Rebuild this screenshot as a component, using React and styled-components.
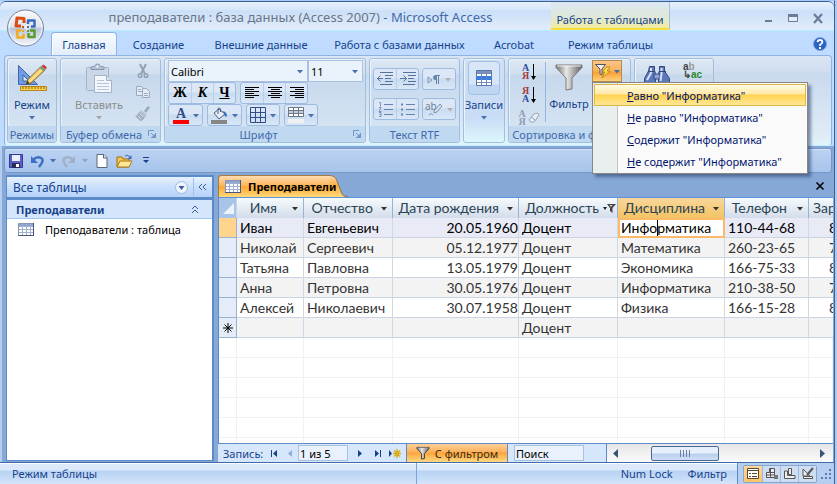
import React, { useState } from "react"
import styled, { createGlobalStyle, css } from "styled-components"

const ui = `"Noto Sans", "Open Sans", sans-serif`

const GlobalStyle = createGlobalStyle`
  * { box-sizing: border-box; }
  body {
    margin: 0;
    background: #a9cbf3;
    font-family: ${ui};
    font-size: 11px;
    color: #15428b;
  }
  button, input, select {
    font: inherit;
    color: inherit;
    margin: 0;
    padding: 0;
    border: 0;
    background: none;
    outline: none;
  }
  svg { display: block; flex: none; overflow: visible; }
`

const Window = styled.div`
  display: flex;
  flex-direction: column;
  min-height: 100vh;
  margin-right: 2px;
  border-top: 1px solid #a9cbf3;
  border-right: 1px solid #3b5f96;
  background: #bfdbff;
  position: relative;
`

/* ---------- title bar ---------- */

const TitleBar = styled.header`
  display: flex;
  height: 30px;
  border-top: 1px solid #3b5f96;
  border-bottom: 1px solid #b4f0fb;
  border-radius: 6px 6px 0 0;
  background: linear-gradient(#e9f1fc 0, #d5e5fa 8px, #cbdff8 9px, #dfebfb 26px);
`

const Title = styled.h1`
  flex: 0 0 551px;
  margin: 0;
  padding: 0 0 0 50px;
  text-align: center;
  font-size: 13px;
  font-weight: 400;
  line-height: 31px;
  color: #6a7587;
  white-space: nowrap;
`

const AppName = styled.span`
  color: #3e6aaa;
`

const ContextTitle = styled.div`
  width: 119px;
  border-right: 1px solid #a9bfd8;
  border-bottom: 2px solid #f5dd3c;
  background: linear-gradient(#dbe8f3, #dfe8d8 60%, #f0ec9e);
  text-align: center;
  line-height: 36px;
  white-space: nowrap;
`

const WindowButtons = styled.div`
  display: flex;
  align-items: center;
  gap: 15px;
  margin-left: auto;
  padding: 4px 11px 0 0;
`

const IconButton = styled.button`
  display: flex;
  align-items: center;
  justify-content: center;
`

const OfficeButton = styled(IconButton)`
  position: absolute;
  left: 6px;
  top: 7px;
`

/* ---------- ribbon ---------- */

const TabRow = styled.nav`
  display: flex;
  align-items: flex-end;
  height: 24px;
  padding-left: 51px;
`

const RibbonTab = styled.button`
  width: ${p => p.$w}px;
  height: 23px;
  border: 1px solid transparent;
  border-bottom: 0;
  border-radius: 4px 4px 0 0;
  white-space: nowrap;
  ${p => p.$active && css`
    border-color: #8db2e3;
    background: linear-gradient(#f7fbff, #e2edfb);
    box-shadow: inset 1px 1px #fff;
  `}
`

const Help = styled(IconButton)`
  margin: 0 7px 4px auto;
`

const Ribbon = styled.section`
  display: flex;
  gap: 3px;
  height: 91px;
  margin: 0 2px 0 4px;
  padding: 2px;
  border: 1px solid #8db2e3;
  border-bottom-color: #c5f0fb;
  border-radius: 4px;
  background: linear-gradient(#dbe6f4 0, #cfddef 16px, #c9d9ed 17px, #dfecf7 80px, #dff5fb);
`

const Group = styled.div`
  display: flex;
  flex-direction: column;
  width: ${p => p.$w}px;
  border: 1px solid #9ebfe0;
  border-radius: 3px;
  box-shadow: inset 1px 1px #eaf2fb;
  background: ${p => p.$plain
    ? "linear-gradient(#d0e0f4, #c8dcf5 70%, #dcf6fc)"
    : "linear-gradient(#dee8f5 0, #d1dfef 15px, #c7d8ed 16px, #d9e7f4)"};
`

const GroupBody = styled.div`
  display: flex;
  flex: 1;
  padding: ${p => p.$pad || "2px 3px 0"};
  gap: ${p => p.$gap || 0}px;
`

const GroupLabel = styled.div`
  display: flex;
  align-items: center;
  justify-content: center;
  height: 16px;
  border-radius: 0 0 3px 3px;
  background: #c1d8f1;
  color: #3e6aaa;
  white-space: nowrap;
  svg { margin-left: auto; margin-right: 3px; }
`

const LabelText = styled.span`
  flex: 1;
  text-align: center;
`

const BigButton = styled.button`
  display: flex;
  flex-direction: column;
  align-items: center;
  width: ${p => p.$w}px;
  color: ${p => p.$off ? "#8d8d8d" : "#15428b"};
`

const BigIcon = styled.span`
  display: flex;
  align-items: center;
  justify-content: center;
  width: 32px;
  height: 34px;
  margin-bottom: 2px;
  ${p => p.$boxed && css`
    border: 1px solid #9fbfe3;
    border-radius: 4px;
    background: linear-gradient(#d8e6f7 22px, #bfd6f2 23px);
  `}
`

const BigText = styled.span`
  line-height: 16px;
  margin-bottom: 3px;
`

const Stack = styled.div`
  display: flex;
  flex-direction: column;
  align-items: center;
  gap: ${p => p.$gap || 0}px;
  padding-top: ${p => p.$top || 0}px;
`

const Row = styled.div`
  display: flex;
  gap: ${p => p.$gap || 0}px;
`

const Tools = styled.div`
  display: flex;
  border: 1px solid #9dbbe0;
  border-radius: 3px;
  background: linear-gradient(#dbe7f6 9px, #c9dbf0 10px, #d9e8f8);
`

const Tool = styled.button`
  display: flex;
  align-items: center;
  justify-content: center;
  gap: 4px;
  width: ${p => p.$w || 22}px;
  height: 20px;
  color: #000;
  font-family: "Liberation Serif", serif;
  font-size: 14px;
  font-weight: 700;
  & + & { border-left: 1px solid #b8cee9; }
`

const Picker = styled.label`
  display: grid;
  align-items: center;
  width: ${p => p.$w}px;
  height: 22px;
  border: 1px solid #abc1de;
  background: #eaf2fb;
  color: #000;
  > * { grid-area: 1 / 1; }
  svg { justify-self: end; margin-right: 4px; pointer-events: none; }
`

const Select = styled.select`
  appearance: none;
  width: 100%;
  padding-left: 2px;
`

const Divider = styled.i`
  width: 1px;
  height: 60px;
  margin: 2px 0 0 6px;
  background: #96b6dd;
`

const MenuAnchor = styled.div`
  position: relative;
`

const FilterButton = styled(IconButton)`
  gap: 3px;
  width: 30px;
  height: 22px;
  border: 1px solid #b08b52;
  background: linear-gradient(#f9c48b, #fbb25b 10px, #f99d32 11px, #fdd17a);
`

const Menu = styled.div`
  position: absolute;
  z-index: 5;
  top: 22px;
  left: 0;
  width: 216px;
  padding: 1px;
  border: 1px solid #868686;
  background: linear-gradient(90deg, #e9eeee 24px, #c5c5c5 24px, #c5c5c5 25px, #fafafa 25px);
  box-shadow: 3px 3px 3px rgba(40, 60, 100, 0.55);
`

const MenuItem = styled.button`
  display: block;
  width: 100%;
  height: 22px;
  padding-left: 32px;
  border: 1px solid transparent;
  text-align: left;
  color: #00156e;
  white-space: nowrap;
  ${p => p.$active && css`
    border-color: #e0b748;
    background: linear-gradient(#fffbe5, #ffe9a5 9px, #ffd34f 10px, #ffe794);
  `}
`

/* ---------- quick access ---------- */

const QuickBar = styled.div`
  display: flex;
  align-items: center;
  height: 25px;
  margin: 1px 2px 2px 4px;
  padding-left: 3px;
  border: 1px solid #7698c8;
  border-radius: 3px;
  box-shadow: inset 0 1px #d3e4fa;
  background: linear-gradient(#bcd3f2, #a7c4eb);
`

const QuickItem = styled(IconButton)`
  width: ${p => p.$w}px;
  height: 20px;
`

/* ---------- workspace ---------- */

const Chrome = styled.div`
  display: flex;
  flex-direction: column;
  flex: 1;
  padding-top: 1px;
  background: #86a8d6;
  box-shadow: inset 2px 0 #b5cdee;
`

const Workspace = styled.main`
  display: flex;
  flex: 1;
  gap: 4px;
  padding: 0 1px 0 6px;
  min-height: 0;
`

const NavPane = styled.aside`
  display: flex;
  flex-direction: column;
  flex: 0 0 208px;
  border: 1px solid #5c8bca;
  border-width: 2px 2px 1px 1px;
  margin-bottom: 1px;
  background: #fff;
  color: #000;
`

const NavHeader = styled.div`
  display: flex;
  align-items: center;
  height: 20px;
  padding: 0 5px 0 6px;
  background: linear-gradient(#e7f2ff, #c8dffc 10px, #b7d3fa);
  color: #15428b;
  font-size: 12px;
`

const NavTitle = styled.span`
  flex: 1;
`

const NavGroup = styled.div`
  display: flex;
  align-items: center;
  justify-content: space-between;
  height: 22px;
  padding: 0 13px 0 9px;
  border-top: 3px solid #5c8bca;
  border-bottom: 1px solid #a3c6f5;
  background: #d5e5fb;
  color: #15428b;
  font-weight: 700;
`

const NavItem = styled.a`
  display: flex;
  align-items: center;
  gap: 11px;
  height: 20px;
  padding-left: 11px;
  color: #000;
  text-decoration: none;
`

const Doc = styled.section`
  display: flex;
  flex-direction: column;
  flex: 1;
  min-width: 0;
`

const DocTabs = styled.div`
  display: flex;
  align-items: center;
  justify-content: space-between;
  height: 23px;
  padding-right: 9px;
  border-bottom: 1px solid #5c93d9;
`

const DocTab = styled.button`
  display: flex;
  align-items: center;
  gap: 7px;
  position: relative;
  z-index: 1;
  width: 112px;
  height: 22px;
  padding-left: 6px;
  border: 1px solid #a67c45;
  border-right: 0;
  border-bottom: 0;
  border-radius: 3px 0 0 0;
  background: linear-gradient(#fddcb0, #fdb455 10px, #fda92f 11px, #ffda7b);
  color: #000;
  font-weight: 700;
  white-space: nowrap;
`

const TabShape = styled.div`
  display: flex;
`

const Sheet = styled.div`
  flex: 1 1 0;
  overflow: hidden;
  background: #fff;
  border-left: 1px solid #5c8bca;
`

const Grid = styled.table`
  width: 100%;
  table-layout: fixed;
  border-collapse: separate;
  border-spacing: 0;
  font-family: Lato, "Noto Sans", sans-serif;
  font-size: 14px;
  line-height: 18px;
  color: #333;
`

const Th = styled.th`
  height: 20px;
  padding: 0 ${p => p.$tight ? 1 : 5}px 0 6px;
  border-right: 1px solid #9ab2d0;
  background: ${p => p.$active
    ? "linear-gradient(#f9d79b, #f3c363)"
    : "linear-gradient(#f6fafd, #d3dcea)"};
  color: #2b4453;
  font-weight: 400;
  text-align: left;
  overflow: hidden;
  white-space: nowrap;
  &:last-child { padding: 0 0 0 4px; border-right: 0; }
`

const HeadCell = styled.div`
  display: flex;
  align-items: center;
  justify-content: flex-end;
  gap: ${p => p.$gap}px;
`

const Corner = styled.th`
  padding: 0 0 0 4px;
  border-right: 1px solid #c4d6ee;
  background: #a9c4e9;
`

const Tr = styled.tr`
  background: ${p => p.$bg};
  ${p => p.$current && "color: #000;"}
`

const Selector = styled.td`
  height: 20px;
  padding: 0 0 0 4px;
  border-right: 1px solid #9ab2d0;
  border-bottom: 1px solid #9ab2d0;
  background: ${p => p.$current ? "#ffd58d" : "#e4ecf7"};
  color: #000;
`

const Td = styled.td`
  height: 20px;
  padding: 0 ${p => p.$right ? 0 : 2}px 0 ${p => p.$pad || 3}px;
  border-right: 1px solid #d0d7e5;
  border-bottom: 1px solid #cbd4e4;
  text-align: ${p => p.$right ? "right" : "left"};
  white-space: nowrap;
  overflow: hidden;
  &:last-child { padding-right: 0; border-right: 0; }
  ${p => p.$editing && css`
    border: 2px solid #fcb968;
    background: #fff;
  `}
`

/* the insertion point stays visible while the sheet is idle */
const CellInput = styled.input`
  display: block;
  width: 100%;
  height: 16px;
  background: linear-gradient(#000, #000) 36px 0 / 1px 16px no-repeat;
  &:focus { background: none; }
`

const EmptyTd = styled.td`
  height: 20px;
  border-right: 1px solid #eff1f6;
  border-bottom: 1px solid #eff1f6;
`

/* ---------- record bar and status bar ---------- */

const RecordBar = styled.div`
  display: flex;
  align-items: center;
  height: 19px;
  border-top: 1px solid #5c8bca;
  background: #d6e6fb;
`

const RecordNav = styled.div`
  display: flex;
  align-items: center;
  width: 188px;
  padding-left: 5px;
`

const RecordLabel = styled.label`
  width: 43px;
`

const RecordInput = styled.input`
  width: ${p => p.$w}px;
  height: 16px;
  padding-left: 1px;
  border: 1px solid #a9c1e0;
  background: #e8f1fc;
  color: #000;
`

const NavButton = styled(IconButton)`
  width: ${p => p.$w || 16}px;
  height: 16px;
`

const FilterToggle = styled(IconButton)`
  gap: 5px;
  width: 102px;
  height: 18px;
  margin-right: 6px;
  border-left: 1px solid #5c8bca;
  border-right: 1px solid #5c8bca;
  background: linear-gradient(#fdd09a, #fdb158 8px, #fca53a 9px, #ffd983);
  color: #3d2b12;
`

const ScrollTrack = styled.div`
  display: flex;
  align-items: center;
  flex: 1;
  height: 18px;
  margin-left: 22px;
  padding: 0 6px 0 5px;
  border-left: 1px solid #5c8bca;
  background: linear-gradient(#e6e6e6, #fbfbfb);
`

const Thumb = styled.div`
  display: flex;
  align-items: center;
  justify-content: center;
  gap: 1px;
  width: 68px;
  height: 15px;
  margin: 0 auto 0 30px;
  border: 1px solid #4c6591;
  border-radius: 2px;
  background: linear-gradient(#e6f0fc 6px, #b9cfee 7px, #cfe0f7);
  i { width: 1px; height: 7px; background: #6a7f9f; margin-right: 1px; }
`

const StatusBar = styled.footer`
  display: flex;
  align-items: center;
  height: 22px;
  padding-left: 12px;
  border-top: 1px solid #3f6cab;
  box-shadow: inset 0 1px #fff;
  background: linear-gradient(#dbe9fb 7px, #b9d3f4 8px, #c9def8 17px, #d5e6fa);
`

const StatusText = styled.span`
  width: ${p => p.$w}px;
`

const StatusKeys = styled.div`
  display: flex;
  gap: 15px;
  flex: 1;
  height: 21px;
  align-items: center;
  justify-content: flex-end;
  padding-right: 10px;
  border-left: 1px solid #7fa4d6;
`

const Views = styled.div`
  display: flex;
  align-items: center;
  height: 21px;
  padding: 0 2px 0 5px;
  border-left: 1px solid #5c8bca;
  background: #b6cff1;
`

const ViewButtons = styled.div`
  display: flex;
  margin-right: 3px;
  border: 1px solid #86a5cf;
  border-radius: 2px;
`

const ViewButton = styled(IconButton)`
  width: 18px;
  height: 16px;
  background: ${p => p.$active ? "linear-gradient(#fbd79c, #fdc368)" : "#cdddf2"};
  & + & { border-left: 1px solid #9fb8dc; }
`

/* ---------- icons ---------- */

const Caret = ({ color = "#4672b0" }) => (
  <svg width="6" height="3" viewBox="0 0 6 3"><path d="M0 0h6L3 3.500z" fill={color} /></svg>
)

const OfficeLogo = () => (
  <svg width="39" height="39" viewBox="0 0 39 39">
    <defs>
      <linearGradient id="orb" x1="0" y1="0" x2="0" y2="1">
        <stop offset="0" stopColor="#f8fafc" />
        <stop offset=".48" stopColor="#dfe4ee" />
        <stop offset=".5" stopColor="#b9c4d9" />
        <stop offset="1" stopColor="#f4f7fb" />
      </linearGradient>
    </defs>
    <circle cx="19.500" cy="20" r="18" fill="url(#orb)" stroke="#7b869c" />
    <circle cx="19.500" cy="20" r="16.500" fill="none" stroke="#fff" strokeOpacity=".7" />
    <g fill="none" strokeWidth="3" strokeLinejoin="round">
      <path d="M18 15v-4.500l-7-.500-1 8h5" stroke="#dc4b12" />
      <path d="M22 16v-3.500h6.500v6H25" stroke="#3a6cb8" strokeWidth="2.500" />
      <path d="M15 22.500h-4l.500 7h6V26" stroke="#f2ab1d" strokeWidth="2.500" />
      <path d="M24 22.500h4.500v6.500h-6V25" stroke="#5a9c2d" strokeWidth="2.500" />
    </g>
    <path d="M18 19h2v-2h2v2h2v2h-2v2h-2v-2h-2z" fill="#fff" opacity=".6" />
    <path d="M16 18h2v2h-2z" fill="#dc4b12" /><path d="M21 18h2v2h-2z" fill="#3a6cb8" />
    <path d="M16 22h2v2h-2z" fill="#f2ab1d" /><path d="M21 22h2v2h-2z" fill="#5a9c2d" />
  </svg>
)

const DesignIcon = () => (
  <svg width="30" height="30" viewBox="0 0 30 30">
    <path d="M1.500 2.500v19h19z" fill="#6f9be0" stroke="#3f64b0" />
    <path d="M6 12v6h6z" fill="#d5e4f8" stroke="#3f64b0" />
    <path d="M3.500 23.500h26v4h-26z" fill="#fbd352" stroke="#b98317" />
    <path d="M6 24v2m3-2v2m3-2v2m3-2v2m3-2v2m3-2v2m3-2v2m3-2v2" stroke="#8f5e0b" />
    <path d="M9 21.500l2-5L24 3.500l4 3.500-14 13z" fill="#f7cf6a" stroke="#8a6320" />
    <path d="M12.500 18.500L26 5.500" stroke="#fff1bb" />
    <path d="M9 21.500l1.500-3.500 2 2z" fill="#333" />
    <path d="M22.500 5l2-2 4 3.500-2 2z" fill="#7d9f77" />
    <path d="M24.500 3l2-1.500 3.500 3-1.500 2z" fill="#c73b36" />
  </svg>
)

const PasteIcon = () => (
  <svg width="28" height="31" viewBox="0 0 28 31">
    <rect x="1.500" y="4.500" width="22" height="23" rx="1" fill="#cbd7e7" stroke="#a3b3c9" />
    <path d="M6 6.500h13V4l-3.500-.500Q14.500 1 12.500 1T9.500 3.500L6 4z" fill="#b5c2d4" stroke="#8496b0" />
    <circle cx="12.500" cy="3.500" r="1" fill="#fff" />
    <path d="M9.500 12.500h12l5 5v12h-17z" fill="#f3f7fc" stroke="#a3b3c9" />
    <path d="M21.500 12.500v5h5" fill="#d7e2ef" stroke="#a3b3c9" />
    <path d="M12 17.500h7m-7 3h12m-12 3h12m-12 3h12" stroke="#b7c5d8" />
  </svg>
)

const ScissorsIcon = () => (
  <svg width="16" height="16" viewBox="0 0 16 16" fill="none" stroke="#93a1b5" strokeWidth="2">
    <path d="M5 1l5 10M11 1L6 11" />
    <circle cx="5" cy="12.500" r="1.800" strokeWidth="1.500" /><circle cx="11" cy="12.500" r="1.800" strokeWidth="1.500" />
  </svg>
)

const CopyIcon = () => (
  <svg width="16" height="14" viewBox="0 0 16 14" fill="#e3ebf5" stroke="#9baac0">
    <path d="M1.500 1.500h5l2 2v7h-7z" /><path d="M3 4.500h3m-3 2h4" />
    <path d="M7.500 3.500h4l3 3v6h-7z" /><path d="M9 8.500h4m-4 2h4" />
  </svg>
)

const BrushIcon = () => (
  <svg width="17" height="17" viewBox="0 0 17 17">
    <path d="M10 6l4-5 2 1.500L12 8z" fill="#9aa9bd" />
    <path d="M7 5l6 5-1.500 2L5 7.500z" fill="#b4c0d0" />
    <path d="M5 7l6 5q-2 4-5 4l-5-5q3-1 4-4z" fill="#a3b0c3" /><path d="M4 11l3 3m-1-5l3 3" stroke="#d6dee9" />
  </svg>
)

const Launcher = () => (
  <svg width="10" height="10" viewBox="0 0 10 10" fill="none" stroke="#6f94c6">
    <path d="M1.500 7V1.500H7M8.500 4v4.500H4" /><path d="M4 4l4 4" /><path d="M5 8.500h3.500V5z" fill="#6f94c6" />
  </svg>
)

const AlignIcon = ({ type }) => {
  const x = n => type === "left" ? 0 : type === "center" ? (14 - n) / 2 : 14 - n
  return (
    <svg width="14" height="12" viewBox="0 0 14 12" fill="#000">
      {[14, 9, 14, 9, 14, 9].map((n, i) => <rect key={i} x={Math.round(x(n))} y={i * 2} width={n} height="1" />)}
    </svg>
  )
}

const FillIcon = () => (
  <svg width="17" height="17" viewBox="0 0 17 17">
    <path d="M3 6l5-4 6 5-6 5z" fill="#e8edf5" stroke="#4c5f80" /><path d="M7 7V1.500Q8.500 0 9.500 2v3" fill="none" stroke="#4c5f80" />
    <path d="M12 4q4 1 4 5-2 2-3-2z" fill="#3f6cb8" /><path d="M0 13h16v4H0z" fill="#868686" />
  </svg>
)

const BordersIcon = () => (
  <svg width="16" height="16" viewBox="0 0 16 16" fill="none" stroke="#2f4f86">
    <path d="M.500 .500h15v15H.500zM5.500 0v16M10.500 0v16M0 5.500h16M0 10.500h16" />
  </svg>
)

const AltRowIcon = () => (
  <svg width="16" height="16" viewBox="0 0 16 16">
    <path d="M.500 .500h15v9H.500z" fill="#fff" stroke="#6c7686" />
    <path d="M1 3h14v3H1z" fill="#c9ced6" /><path d="M5.500 1v9m5-9v9M1 3.500h14m-14 3h14" stroke="#6c7686" />
    <path d="M0 12h16v4H0z" fill="#f0f0f0" />
  </svg>
)

const IndentIcon = ({ flip }) => (
  <svg width="16" height="14" viewBox="0 0 16 14" fill="none" stroke="#56719c">
    <path d="M3 .500h13M8 3.500h8M8 6.500h6M8 9.500h8M3 12.500h12" />
    <path d={flip ? "M0 6.500h6M3.500 3.500l3 3-3 3" : "M0 6.500h6M3.500 3.500l-3 3 3 3"} />
  </svg>
)

const ListIcon = ({ dots }) => (
  <svg width="15" height="15" viewBox="0 0 15 15" fill="none" stroke="#6883ad">
    <path d="M6 2.500h9M6 7.500h9M6 12.500h9" />
    {dots
      ? <path d="M1 2.500h2M1 7.500h2M1 12.500h2" strokeWidth="2" />
      : <path d="M1 .500h1.500v4M1 5.500h2l-2 4h2.500M1 10.500h2v4H1M1.500 12.500H3" strokeWidth=".8" />}
  </svg>
)

const ParagraphIcon = () => (
  <svg width="14" height="11" viewBox="0 0 14 11">
    <path d="M1 3l4 3-4 3z" fill="none" stroke="#7e94b6" />
    <path d="M9.500 1v9m2-9v9M8 1.500h5" stroke="#6883ad" fill="none" /><path d="M9 1v5q-3 0-3-2.500T9 1z" fill="#6883ad" />
  </svg>
)

const HighlightIcon = () => (
  <svg width="18" height="16" viewBox="0 0 18 16">
    <text x="0" y="9" fontSize="10" fontWeight="400" fill="#6d7f9a" fontFamily="Noto Sans">ab</text>
    <path d="M15 3l2 2-5 6-3 1v-2z" fill="#d4deea" stroke="#8496b0" /><path d="M4 14q2-3 4 0" stroke="#8496b0" fill="none" />
  </svg>
)

const RecordsIcon = () => (
  <svg width="18" height="18" viewBox="0 0 18 18">
    <path d="M1.500 1.500h15v15h-15z" fill="#fff" stroke="#5874a8" />
    <path d="M2 2h14v2H2z" fill="#7d94bb" /><path d="M1 7h16v4H1z" fill="#3a7be0" />
    <path d="M6.500 2v14m5-14v14M2 4.500h14M2 13.500h14" stroke="#7089b5" />
  </svg>
)

const SortLetters = styled.span`
  display: flex;
  flex-direction: column;
  font: 700 10px/8px "Liberation Serif", serif;
  color: ${p => p.$top};
  span { color: ${p => p.$bottom}; }
`

const SortIcon = ({ a, b, ca, cb }) => (
  <>
    <SortLetters $top={ca} $bottom={cb}>{a}<span>{b}</span></SortLetters>
    <svg width="5" height="16" viewBox="0 0 5 16"><path d="M2 0h1v12h2l-2.500 4L0 12h2z" /></svg>
  </>
)

const SortButton = styled(IconButton)`
  gap: 2px;
  width: 20px;
  height: 17px;
`

const EraserIcon = () => (
  <svg width="12" height="12" viewBox="0 0 12 12"><path d="M1 8l5-6q4-2 5 1L7 9q-4 3-6-1zM3 5l4 3" fill="#e7edf5" stroke="#93a1b5" /></svg>
)

const Funnel = ({ size = 30 }) => (
  <svg width={size} height={size} viewBox="0 0 30 30">
    <defs>
      <linearGradient id={"fn" + size} x1="0" x2="1">
        <stop offset="0" stopColor="#6f6f6f" /><stop offset=".4" stopColor="#e8e8e8" /><stop offset="1" stopColor="#5f5f5f" />
      </linearGradient>
    </defs>
    <path d="M2 3h26v2.500L18 16v11l-6 1V16L2 5.500z" fill={`url(#fn${size})`} stroke={size < 20 ? "#333" : "#7a7a7a"} strokeWidth={size < 20 ? 2 : 1} />
    <path d="M3 4h24" stroke="#f3f3f3" />
  </svg>
)

const FilterBolt = () => (
  <svg width="16" height="16" viewBox="0 0 16 16">
    <path d="M.500 1.500h10L7 6v6l-2-1V6z" fill="#eee" stroke="#555" />
    <path d="M12 4l-5 5h3l-3 6 8-7h-3l3-4z" fill="#ffe14a" stroke="#b77a10" strokeWidth=".8" />
  </svg>
)

const Binoculars = () => (
  <svg width="28" height="28" viewBox="0 0 28 28" stroke="#34487c">
    <path d="M6.500 3.500h5v4l1 3v13h-11v-8L5.500 8z" fill="#5c79bb" />
    <path d="M16.500 3.500h5V8l5 7.500v8h-11v-13l1-3z" fill="#5c79bb" />
    <path d="M11 11h6v5h-6z" fill="#8ba4d8" />
    <path d="M8 5v5l-4 7M18.500 5v6l-1 7" stroke="#d6e2fa" strokeWidth="2" fill="none" />
    <path d="M5 8.500h7m4 0h7" />
  </svg>
)

const ReplaceIcon = styled.span`
  display: block;
  font: 700 10px/8px "Liberation Sans", sans-serif;
  color: #444;
  i { color: #999; font-style: normal; }
  b { color: #2b8a2b; }
`

const HelpIcon = () => (
  <svg width="14" height="14" viewBox="0 0 14 14">
    <circle cx="7" cy="7" r="6.500" fill="#2a63c8" stroke="#7da2dc" />
    <path d="M4.500 5.200Q4.800 3 7 3t2.400 2Q9.400 6.200 8 7T7 9" fill="none" stroke="#fff" strokeWidth="1.800" />
    <path d="M6 10h2v2H6z" fill="#fff" />
  </svg>
)

const TableIcon = () => (
  <svg width="16" height="13" viewBox="0 0 16 13">
    <path d="M.500 .500h15v12H.500z" fill="#fff" stroke="#8794b5" /><path d="M1 1h14v2H1z" fill="#8fa4cc" />
    <path d="M4.500 1v11m4-11v11m4-11v11M1 3.500h14M1 6.500h14M1 9.500h14" stroke="#9fb0d0" /><path d="M0 12.500h16M15.500 0v13" stroke="#48587c" />
  </svg>
)

const SaveIcon = () => (
  <svg width="14" height="14" viewBox="0 0 14 14">
    <path d="M.500 .500h13v13h-13z" fill="#5b61c8" stroke="#363a94" />
    <path d="M3 1h8v6H3z" fill="#e9f0fb" /><path d="M3 9h8v5H3z" fill="#2b2c55" /><path d="M7 10h3v3H7z" fill="#fff" />
  </svg>
)

const UndoIcon = ({ off }) => (
  <svg width="14" height="14" viewBox="0 0 14 14" transform={off ? "scale(-1 1)" : undefined}>
    <path d="M3 6q4-4 8-2t-2 9" fill="none" stroke={off ? "#a1b0c8" : "#3d6fc4"} strokeWidth="2.500" />
    <path d="M1 2v7h7z" fill={off ? "#a1b0c8" : "#3d6fc4"} />
  </svg>
)

const NewIcon = () => (
  <svg width="12" height="14" viewBox="0 0 12 14"><path d="M1 .500h7l3 3v10H1z" fill="#fdfefe" stroke="#58677f" /><path d="M7.500 .500v3.500H11" fill="#d5dfec" stroke="#58677f" /></svg>
)

const OpenIcon = () => (
  <svg width="17" height="14" viewBox="0 0 17 14">
    <path d="M1 13V3h5l1 2h6v8z" fill="#f6c94e" stroke="#9b6f14" /><path d="M1 13l3-6h12l-3 6z" fill="#ffe596" stroke="#a87a1b" />
    <path d="M9 2q3-2 5 1" fill="none" stroke="#3f6cb8" /><path d="M15.500 1v4h-4z" fill="#3f6cb8" />
  </svg>
)

const FilterCaret = () => (
  <svg width="13" height="10" viewBox="0 0 13 10"><path d="M0 4h4l-2 3z" fill="#222" /><path d="M4 1h9L9.500 5v5L7 8V5z" fill="#444" /><path d="M6.500 2h3L8 4z" fill="#ddd" /></svg>
)

const Arrow = ({ d, fill = "#15428b" }) => (
  <svg width="9" height="9" viewBox="0 0 9 9"><path d={d} fill={fill} /></svg>
)

/* ---------- data ---------- */

const tabs = [
  ["Главная", 66], ["Создание", 83], ["Внешние данные", 122],
  ["Работа с базами данных", 155], ["Acrobat", 74], ["Режим таблицы", 119],
]

const columns = [
  { name: "Имя", w: 67, gap: 15 },
  { name: "Отчество", w: 89, gap: 8 },
  { name: "Дата рождения", w: 126, gap: 8 },
  { name: "Должность", w: 99, filtered: true, gap: 4 },
  { name: "Дисциплина", w: 107, gap: 8 },
  { name: "Телефон", w: 84, gap: 10 },
]

const people = [
  ["Иван", "Евгеньевич", "20.05.1960", "Доцент", "Информатика", "110-44-68", "8"],
  ["Николай", "Сергеевич", "05.12.1977", "Доцент", "Математика", "260-23-65", "7"],
  ["Татьяна", "Павловна", "13.05.1979", "Доцент", "Экономика", "166-75-33", "8"],
  ["Анна", "Петровна", "30.05.1976", "Доцент", "Информатика", "210-38-50", "7"],
  ["Алексей", "Николаевич", "30.07.1958", "Доцент", "Физика", "166-15-28", "8"],
]

const menuItems = ["Равно", "Не равно", "Содержит", "Не содержит"]

function RibbonGroups() {
  const [hovered, setHovered] = useState(0)

  return (
    <Ribbon>
      <Group $w={50}>
        <GroupBody>
          <BigButton $w={43}>
            <BigIcon><DesignIcon /></BigIcon>
            <BigText>Режим</BigText>
            <Caret />
          </BigButton>
        </GroupBody>
        <GroupLabel>Режимы</GroupLabel>
      </Group>

      <Group $w={101}>
        <GroupBody>
          <BigButton $w={70} $off>
            <BigIcon><PasteIcon /></BigIcon>
            <BigText>Вставить</BigText>
            <Caret color="#a5a5a5" />
          </BigButton>
          <Stack $gap={6} $top={2}>
            <IconButton aria-label="Вырезать"><ScissorsIcon /></IconButton>
            <IconButton aria-label="Копировать"><CopyIcon /></IconButton>
            <IconButton aria-label="Формат по образцу"><BrushIcon /></IconButton>
          </Stack>
        </GroupBody>
        <GroupLabel><LabelText>Буфер обмена</LabelText><Launcher /></GroupLabel>
      </Group>

      <Group $w={202}>
        <GroupBody $pad="1px 3px 0">
          <div>
            <Row>
              <Picker $w={140}>
                <Select aria-label="Шрифт"><option>Calibri</option></Select>
                <Caret />
              </Picker>
              <Picker $w={55}>
                <Select aria-label="Размер"><option>11</option></Select>
                <Caret />
              </Picker>
            </Row>
            <Row $gap={4}>
              <Tools>
                <Tool><b>Ж</b></Tool>
                <Tool><i>К</i></Tool>
                <Tool><u>Ч</u></Tool>
              </Tools>
              <Tools>
                <Tool><AlignIcon type="left" /></Tool>
                <Tool><AlignIcon type="center" /></Tool>
                <Tool><AlignIcon type="right" /></Tool>
              </Tools>
            </Row>
            <Row $gap={4}>
              <Tools>
                <Tool $w={33}>
                  <svg width="16" height="17" viewBox="0 0 16 17">
                    <text x="3" y="11" fontSize="14" fontWeight="700" fill="#2f4f86">A</text>
                    <path d="M0 13h16v4H0z" fill="#f00" />
                  </svg>
                  <Caret />
                </Tool>
              </Tools>
              <Tools><Tool $w={33}><FillIcon /><Caret /></Tool></Tools>
              <Tools><Tool $w={32}><BordersIcon /><Caret /></Tool></Tools>
              <Tools><Tool $w={32}><AltRowIcon /><Caret /></Tool></Tools>
            </Row>
          </div>
        </GroupBody>
        <GroupLabel><LabelText>Шрифт</LabelText><Launcher /></GroupLabel>
      </Group>

      <Group $w={91}>
        <GroupBody $pad="9px 3px 0">
          <Stack $gap={8}>
            <Row $gap={3}>
              <Tools><Tool><IndentIcon /></Tool><Tool><IndentIcon flip /></Tool></Tools>
              <Tools><Tool $w={32}><ParagraphIcon /><Caret color="#b5b0ae" /></Tool></Tools>
            </Row>
            <Row $gap={3}>
              <Tools><Tool><ListIcon /></Tool><Tool><ListIcon dots /></Tool></Tools>
              <Tools><Tool $w={32}><HighlightIcon /><Caret color="#b5b0ae" /></Tool></Tools>
            </Row>
          </Stack>
        </GroupBody>
        <GroupLabel>Текст RTF</GroupLabel>
      </Group>

      <Group $w={42} $plain>
        <GroupBody $pad="2px 0 0">
          <BigButton $w={40}>
            <BigIcon $boxed><RecordsIcon /></BigIcon>
            <BigText>Записи</BigText>
            <Caret />
          </BigButton>
        </GroupBody>
      </Group>

      <Group $w={123}>
        <GroupBody $pad="1px 3px 0 10px">
          <Stack $gap={6} $top={3}>
            <SortButton aria-label="По возрастанию"><SortIcon a="А" b="Я" ca="#2d4d9c" cb="#a03c3c" /></SortButton>
            <SortButton aria-label="По убыванию"><SortIcon a="Я" b="А" ca="#a03c3c" cb="#2d4d9c" /></SortButton>
            <SortButton aria-label="Очистить сортировки">
              <SortLetters $top="#8f9db3" $bottom="#8f9db3">А<span>Я</span></SortLetters>
              <EraserIcon />
            </SortButton>
          </Stack>
          <Divider />
          <BigButton $w={46}>
            <BigIcon><Funnel /></BigIcon>
            <BigText>Фильтр</BigText>
          </BigButton>
          <MenuAnchor>
            <FilterButton aria-label="Выделение"><FilterBolt /><Caret /></FilterButton>
            <Menu role="menu">
              {menuItems.map((item, i) => (
                <MenuItem key={item} role="menuitem" $active={i === hovered} onMouseEnter={() => setHovered(i)}>
                  <u>{item[0]}</u>{item.slice(1)} "Информатика"
                </MenuItem>
              ))}
            </Menu>
          </MenuAnchor>
        </GroupBody>
        <GroupLabel>Сортировка и фильтр</GroupLabel>
      </Group>

      <Group $w={80}>
        <GroupBody $pad="4px 8px 0" $gap={12}>
          <Binoculars />
          <ReplaceIcon>a<i>b</i><br />↳<b>ac</b></ReplaceIcon>
        </GroupBody>
        <GroupLabel>Найти</GroupLabel>
      </Group>
    </Ribbon>
  )
}

function DataSheet() {
  const [subject, setSubject] = useState("Информатика")

  return (
    <Grid>
      <colgroup>
        <col width="18" />
        {columns.map(c => <col key={c.name} width={c.w} />)}
        <col />
      </colgroup>
      <thead>
        <tr>
          <Corner><svg width="11" height="11" viewBox="0 0 11 11"><path d="M11 0v11H0z" fill="#eef3fa" /></svg></Corner>
          {columns.map(c => (
            <Th key={c.name} $active={c.name === "Дисциплина"} $tight={c.filtered}>
              <HeadCell $gap={c.gap}>
                {c.name}
                {c.filtered ? <FilterCaret /> : <Caret color="#333" />}
              </HeadCell>
            </Th>
          ))}
          <Th>Зарплата</Th>
        </tr>
      </thead>
      <tbody>
        {people.map((row, r) => (
          <Tr key={r} $current={r === 0} $bg={r === 0 ? "#e8eaf5" : r % 2 ? "#f3f3f3" : "#fff"}>
            <Selector $current={r === 0} />
            {row.map((text, c) => r === 0 && c === 4 ? (
              <Td key={c} $editing $pad={1}>
                <CellInput aria-label="Дисциплина" value={subject} onChange={e => setSubject(e.target.value)} />
              </Td>
            ) : (
              <Td key={c} $right={c === 2} $pad={c === 6 ? 20 : 3}>{text}</Td>
            ))}
          </Tr>
        ))}
        <Tr $bg="#f3f3f3">
          <Selector>
            <svg width="10" height="10" viewBox="0 0 10 10" stroke="#000"><path d="M5 0v10M0 5h10M1.500 1.500l7 7M8.500 1.500l-7 7" /></svg>
          </Selector>
          <Td /><Td /><Td /><Td>Доцент</Td><Td /><Td /><Td />
        </Tr>
        {[0, 1, 2, 3, 4, 5].map(r => (
          <tr key={r} aria-hidden="true">
            {[0, 1, 2, 3, 4, 5, 6, 7].map(c => <EmptyTd key={c} />)}
          </tr>
        ))}
      </tbody>
    </Grid>
  )
}

export default function App() {
  return (
    <>
      <GlobalStyle />
      <Window>
        <TitleBar>
          <Title>преподаватели : база данных (Access 2007) <AppName>- Microsoft Access</AppName></Title>
          <ContextTitle>Работа с таблицами</ContextTitle>
          <WindowButtons>
            <IconButton aria-label="Свернуть">
              <svg width="9" height="9" viewBox="0 0 9 9"><path d="M1 6h7v2H1z" fill="#6b7c98" /></svg>
            </IconButton>
            <IconButton aria-label="Развернуть">
              <svg width="10" height="8" viewBox="0 0 10 8"><path d="M.500 .500h9v7h-9z" fill="#e3edfa" stroke="#6b7c98" /><path d="M0 0h10v3H0z" fill="#6b7c98" /></svg>
            </IconButton>
            <IconButton aria-label="Закрыть">
              <svg width="10" height="9" viewBox="0 0 10 9"><path d="M1 0l8 9M9 0L1 9" stroke="#6b7c98" strokeWidth="2.200" /></svg>
            </IconButton>
          </WindowButtons>
        </TitleBar>
        <OfficeButton aria-label="Office"><OfficeLogo /></OfficeButton>

        <TabRow>
          {tabs.map(([name, w], i) => <RibbonTab key={name} $w={w} $active={i === 0}>{name}</RibbonTab>)}
          <Help aria-label="Справка"><HelpIcon /></Help>
        </TabRow>

        <RibbonGroups />

        <Chrome>
          <QuickBar>
            <QuickItem $w={16} aria-label="Сохранить"><SaveIcon /></QuickItem>
            <QuickItem $w={26} aria-label="Отменить"><UndoIcon /></QuickItem>
            <QuickItem $w={6} aria-label="Список отмены"><Caret /></QuickItem>
            <QuickItem $w={26} aria-label="Вернуть"><UndoIcon off /></QuickItem>
            <QuickItem $w={6} aria-label="Список возврата"><Caret color="#8fa4c4" /></QuickItem>
            <QuickItem $w={28} aria-label="Создать"><NewIcon /></QuickItem>
            <QuickItem $w={16} aria-label="Открыть"><OpenIcon /></QuickItem>
            <QuickItem $w={28} aria-label="Настройка панели">
              <svg width="6" height="7" viewBox="0 0 6 7" fill="#15428b"><path d="M0 0h6v1H0zM0 3h6L3 6z" /></svg>
            </QuickItem>
          </QuickBar>

          <Workspace>
            <NavPane>
              <NavHeader>
                <NavTitle>Все таблицы</NavTitle>
                <IconButton aria-label="Категории">
                  <svg width="13" height="13" viewBox="0 0 13 13"><circle cx="6.500" cy="6.500" r="6" fill="#eef4fc" stroke="#a9b9d3" /><path d="M3.500 5h6l-3 4z" fill="#3a5d9c" /></svg>
                </IconButton>
                <Row $gap={5}>
                  <span />
                  <IconButton aria-label="Свернуть область">
                    <svg width="14" height="18" viewBox="0 0 14 18" fill="none" stroke="#3a5d9c"><path d="M.500 0v18" stroke="#9fc0ee" /><path d="M9 6L6 9l3 3M13 6l-3 3 3 3" /></svg>
                  </IconButton>
                </Row>
              </NavHeader>
              <NavGroup>
                Преподаватели
                <svg width="8" height="9" viewBox="0 0 8 9" fill="none" stroke="#3a5d9c"><path d="M1 4l3-3 3 3M1 8l3-3 3 3" /></svg>
              </NavGroup>
              <NavItem href="#table"><TableIcon />Преподаватели : таблица</NavItem>
            </NavPane>

            <Doc>
              <DocTabs>
                <TabShape>
                  <DocTab><TableIcon />Преподаватели</DocTab>
                  <svg width="18" height="22" viewBox="0 0 18 22">
                    <defs>
                      <linearGradient id="tabEnd" x1="0" y1="0" x2="0" y2="1">
                        <stop offset="0" stopColor="#fddcb0" /><stop offset=".5" stopColor="#fdad3c" /><stop offset="1" stopColor="#ffda7b" />
                      </linearGradient>
                    </defs>
                    <path d="M0 0Q5 0 7 6L12 19Q13 22 18 22H0z" fill="url(#tabEnd)" />
                    <path d="M0 .500Q5 .500 7 6L12 19Q13 21.500 18 21.500" fill="none" stroke="#8d7350" />
                  </svg>
                </TabShape>
                <IconButton aria-label="Закрыть таблицу">
                  <svg width="8" height="8" viewBox="0 0 8 8"><path d="M.500 .500l7 7M7.500 .500l-7 7" stroke="#000" strokeWidth="1.600" /></svg>
                </IconButton>
              </DocTabs>
              <Sheet><DataSheet /></Sheet>
              <RecordBar>
                <RecordNav>
                  <RecordLabel htmlFor="record">Запись:</RecordLabel>
                  <NavButton aria-label="Первая"><Arrow d="M1 1h1v7H1zM7 1v7L3 4.500z" /></NavButton>
                  <NavButton aria-label="Предыдущая"><Arrow d="M6 1v7L2 4.500z" fill="#8fb0de" /></NavButton>
                  <RecordInput id="record" $w={50} defaultValue="1 из 5" />
                  <NavButton $w={22} aria-label="Следующая"><Arrow d="M3 1v7l4-3.500z" /></NavButton>
                  <NavButton aria-label="Последняя"><Arrow d="M1 1v7l4-3.500zM6 1h1v7H6z" /></NavButton>
                  <NavButton $w={18} aria-label="Новая запись">
                    <svg width="12" height="9" viewBox="0 0 12 9"><path d="M0 1v7l3-3.500z" fill="#15428b" /><path d="M8 0v9M4 4.500h8M5 1.500l6 6M11 1.500l-6 6" stroke="#d9ae1c" strokeWidth="1.500" /></svg>
                  </NavButton>
                </RecordNav>
                <FilterToggle><Funnel size={14} />С фильтром</FilterToggle>
                <RecordInput aria-label="Поиск" $w={70} defaultValue="Поиск" />
                <ScrollTrack>
                  <Arrow d="M6 0v9L1 4.500z" fill="#3b5176" />
                  <Thumb><i /><i /><i /><i /></Thumb>
                  <Arrow d="M2 0v9l5-4.500z" fill="#3b5176" />
                </ScrollTrack>
              </RecordBar>
            </Doc>
          </Workspace>
        </Chrome>

        <StatusBar>
          <StatusText $w={404}>Режим таблицы</StatusText>
          <StatusKeys><span>Num Lock</span><span>Фильтр</span></StatusKeys>
          <Views>
            <ViewButtons>
              <ViewButton $active aria-label="Таблица">
                <svg width="12" height="11" viewBox="0 0 12 11" stroke="#5a4a2c"><path d="M.500 .500h11v10H.500z" fill="#fff" /><path d="M1 2.500h10M2 5.500h2m1 0h5M2 8.500h2m1 0h5" /></svg>
              </ViewButton>
              <ViewButton aria-label="Сводная таблица">
                <svg width="12" height="11" viewBox="0 0 12 11" fill="#eee" stroke="#555"><path d="M3.500 .500h5v4h-5zM.500 4.500h8v5h-8zM4.500 1v8M1 7h8" /><path d="M8 7h4v4H8z" fill="#777" stroke="none" /></svg>
              </ViewButton>
              <ViewButton aria-label="Сводная диаграмма">
                <svg width="12" height="11" viewBox="0 0 12 11" fill="#eee" stroke="#555"><path d="M.500 3v7.500H11v-3H3.500V3zM4.500 .500h3v6h-3z" /></svg>
              </ViewButton>
              <ViewButton aria-label="Конструктор">
                <svg width="12" height="11" viewBox="0 0 12 11" fill="#eee" stroke="#555"><path d="M1 1v7h7zM1.500 8.500h9v2h-9z" /><path d="M11 0L5 7" strokeWidth="2" /></svg>
              </ViewButton>
            </ViewButtons>
            <svg width="12" height="14" viewBox="0 0 12 14" fill="#5c7db3"><path d="M9 2h2v2H9zM5 6h2v2H5zM9 6h2v2H9zM1 10h2v2H1zM5 10h2v2H5zM9 10h2v2H9z" /></svg>
          </Views>
        </StatusBar>
      </Window>
    </>
  )
}
